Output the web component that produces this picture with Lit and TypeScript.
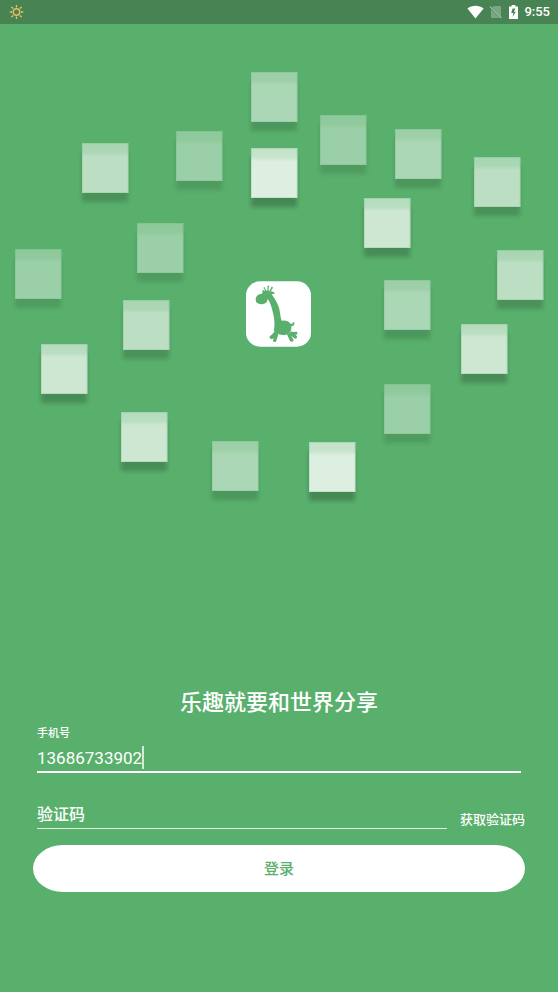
import { LitElement, html, svg, css } from "lit";
import { customElement, state } from "lit/decorators.js";
import { styleMap } from "lit/directives/style-map.js";

// Floating tiles around the logo: left, top, opacity.
const TILES: [number, number, number][] = [
  [251, 72, 0.5],
  [251, 148, 0.8],
  [176, 131, 0.4],
  [320, 115, 0.4],
  [395, 129, 0.5],
  [474, 157, 0.6],
  [82, 143, 0.6],
  [137, 223, 0.4],
  [364, 198, 0.7],
  [15, 249, 0.4],
  [497, 250, 0.6],
  [384, 280, 0.5],
  [123, 300, 0.6],
  [461, 324, 0.7],
  [41, 344, 0.7],
  [384, 384, 0.4],
  [121, 412, 0.7],
  [212, 441, 0.5],
  [309, 442, 0.8],
];

@customElement("status-bar")
class StatusBar extends LitElement {
  static styles = css`
    :host {
      display: flex;
      align-items: center;
      gap: 5px;
      height: 24px;
      padding: 0 8px 0 9px;
      box-sizing: border-box;
      background: #488453;
      color: #fff;
      font: 500 13px/24px Roboto, sans-serif;
    }
    svg {
      display: block;
      flex: none;
    }
    .sun {
      margin-right: auto;
    }
  `;

  render() {
    return html`
      <svg class="sun" width="15" height="16" viewBox="0 0 15 16" fill="none" stroke="#e9c05c" stroke-width="1.4">
        <circle cx="7.5" cy="8" r="3.2" />
        <path d="M7.5 1v2.4M7.5 12.6V15M.8 8h2.3M11.9 8h2.3M2.4 3l1.7 1.6M10.9 11.4l1.7 1.6M12.6 3l-1.7 1.6M4.1 11.4L2.4 13" />
      </svg>
      <svg width="17" height="14" viewBox="0 0 17 14">
        <path d="M.4 3.6C5-.2 12-.2 16.6 3.6L8.5 13.4z" fill="#fff" />
      </svg>
      <svg width="14" height="14" viewBox="0 0 14 14">
        <path d="M4.6 1H12v10.4L3.2 2.6zM2 4.2l8.8 8.8H2z" fill="#fff" opacity=".28" />
        <path d="M1 1.6l11.4 11.4" stroke="#fff" stroke-width="1.2" opacity=".5" />
      </svg>
      <svg width="11" height="14" viewBox="0 0 11 14">
        <path d="M3.6 0h3.8v1.4H10V14H1V1.4h2.6z" fill="#fff" />
        <path d="M7.4 3.4H4.6L3.2 8h2.2l-.8 4 3.2-5.2H5.9z" fill="#488453" />
      </svg>
      <span>9:55</span>
    `;
  }
}

@customElement("logo-scene")
class LogoScene extends LitElement {
  static styles = css`
    :host,
    svg {
      display: block;
      width: 100%;
    }
  `;

  render() {
    return html`
      <svg viewBox="0 24 558 663" role="img" aria-label="长颈鹿">
        <defs>
          <linearGradient id="face" x1="0" y1="0" x2="0" y2="1">
            <stop offset="0" stop-color="#dcefe0" />
            <stop offset=".18" stop-color="#e3f2e6" />
            <stop offset=".27" stop-color="#fff" />
          </linearGradient>
          <filter id="soft" x="-20%" y="-20%" width="140%" height="140%">
            <feGaussianBlur stdDeviation="2" />
          </filter>
        </defs>
        ${TILES.map(
          ([x, y, o]) => svg`
            <g transform="translate(${x} ${y})" opacity=${o}>
              <rect x="0" y="9" width="46" height="50" fill="#000" opacity=".28" filter="url(#soft)" />
              <rect width="46.5" height="50" fill="url(#face)" />
              <rect x=".5" y=".5" width="45.5" height="49" fill="none" stroke="#59af6c" stroke-opacity=".2" />
            </g>`
        )}
        <g transform="translate(236 272) scale(.3333)">
          <rect x="30" y="28" width="195" height="196" rx="42" fill="#fff" />
          <g fill="#59af6c">
            <path d="M59 82C60 71 68 66 77 66C79 60 84 56 90 56C98 55 103 59 106 65C112 74 122 87 128 104C133 120 133 138 138 147C147 144 157 147 163 155C169 157 171 154 172 150L175 151C177 158 173 163 166 163C167 172 164 180 158 185C149 190 137 190 129 187C123 184 117 179 113 176C117 166 116 145 112 127C108 108 103 91 95 80C95 88 91 94 82 96C73 98 64 95 60 89z" />
            <path d="M78 58C79 53 85 55 89 60L85 64z" />
            <path d="M99 60C105 55 113 59 117 64C111 69 102 67 99 63z" />
            <path d="M84 48l4 2 4 9-4 1zM95 43l3-1 0 16-4 0zM107 46l3 2-7 12-4-2z" />
            <circle cx="85" cy="48" r="2.5" />
            <circle cx="97" cy="43" r="2.5" />
            <circle cx="108" cy="47" r="2.5" />
            <path d="M117 176L127 185L111 200C106 204 99 199 101 193C107 189 112 184 117 176z" />
            <path d="M117 184L127 187L121 206C120 212 110 211 111 205C114 199 115 192 117 184z" />
            <path d="M153 187L162 183C165 192 170 198 173 204C172 211 163 211 161 205z" />
            <path d="M161 180L169 182L182 191C186 197 180 202 175 199L162 189z" />
            <path d="M164 178L172 180L182 179C187 183 184 188 179 188L165 186z" />
          </g>
        </g>
      </svg>
    `;
  }
}

@customElement("app-root")
class AppRoot extends LitElement {
  @state() private phone = "13686733902";
  @state() private code = "";

  static styles = css`
    :host {
      display: flex;
      flex-direction: column;
      min-height: 100vh;
      box-sizing: border-box;
      background: #59af6c;
      color: #fff;
      font-family: Roboto, "Noto Sans CJK SC", sans-serif;
    }
    h1 {
      margin: 0 0 8px;
      font-size: 22px;
      font-weight: 500;
      line-height: 32px;
      text-align: center;
    }
    form {
      display: flex;
      flex-direction: column;
      padding: 0 33px 32px;
    }
    .label {
      display: block;
      padding: 0 4px;
      font-size: 11px;
      font-weight: 500;
      line-height: 14px;
    }
    .field {
      position: relative;
      display: flex;
      margin: 0 4px;
    }
    .phone {
      margin-top: 4px;
      border-bottom: 2px solid #fff;
    }
    .code {
      flex: 1;
      margin: 0;
      padding-bottom: 1px;
      border-bottom: 1px solid #e2f1e5;
    }
    input {
      flex: 1;
      min-width: 0;
      height: 26px;
      margin: 0;
      padding: 0;
      border: 0;
      outline: 0;
      background: none;
      color: inherit;
      font: 400 17px/26px Roboto, "Noto Sans CJK SC", sans-serif;
      caret-color: #fff;
    }
    input::placeholder {
      color: #fff;
      font-size: 16px;
      font-weight: 500;
      opacity: 1;
    }
    .caret {
      position: absolute;
      top: 1px;
      width: 2px;
      height: 23px;
      background: #d5ebd9;
      font-size: 17px;
    }
    .row {
      display: flex;
      align-items: flex-end;
      gap: 13px;
      margin: 28px 0 16px 4px;
    }
    button {
      margin: 0;
      padding: 0;
      border: 0;
      background: none;
      color: inherit;
      font: 500 13px/18px Roboto, "Noto Sans CJK SC", sans-serif;
      cursor: pointer;
    }
    .login {
      height: 47px;
      border-radius: 30px / 50%;
      background: #fff;
      color: #59af6c;
      font-size: 15px;
    }
  `;

  render() {
    return html`
      <status-bar></status-bar>
      <logo-scene></logo-scene>
      <h1>乐趣就要和世界分享</h1>
      <form @submit=${(e: Event) => e.preventDefault()}>
        <label class="label" for="phone">手机号</label>
        <div class="field phone">
          <input
            id="phone"
            type="tel"
            .value=${this.phone}
            @input=${(e: Event) => (this.phone = (e.target as HTMLInputElement).value)}
          />
          <span class="caret" style=${styleMap({ left: `${this.phone.length}ch` })}></span>
        </div>
        <div class="row">
          <div class="field code">
            <input
              type="text"
              aria-label="验证码"
              placeholder="验证码"
              .value=${this.code}
              @input=${(e: Event) => (this.code = (e.target as HTMLInputElement).value)}
            />
          </div>
          <button type="button">获取验证码</button>
        </div>
        <button class="login" type="submit">登录</button>
      </form>
    `;
  }
}
